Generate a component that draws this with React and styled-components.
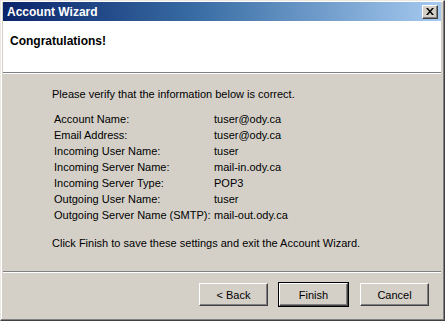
import React from 'react'
import styled, {createGlobalStyle} from 'styled-components'

const GlobalStyle = createGlobalStyle`
  html, body {
    margin: 0;
    padding: 0;
    background: #d4d0c8;
  }
  body {
    font-family: "Liberation Sans", Arial, sans-serif;
    font-size: 11px;
    color: #000;
  }
`

const rows = [
  ['Account Name:', 'tuser@ody.ca'],
  ['Email Address:', 'tuser@ody.ca'],
  ['Incoming User Name:', 'tuser'],
  ['Incoming Server Name:', 'mail-in.ody.ca'],
  ['Incoming Server Type:', 'POP3'],
  ['Outgoing User Name:', 'tuser'],
  ['Outgoing Server Name (SMTP):', 'mail-out.ody.ca'],
]

const App = () => {
  return (
    <>
      <GlobalStyle />
      <Window>
        <TitleBar>
          <TitleText>Account Wizard</TitleText>
          <CloseButton>
            <svg width="8" height="7" viewBox="0 0 8 7">
              <path d="M0 0h2l2 2.5L6 0h2L5 3.5 8 7H6L4 4.5 2 7H0l3-3.5z" fill="#000" />
            </svg>
          </CloseButton>
        </TitleBar>
        <Header>
          <HeaderTitle>Congratulations!</HeaderTitle>
        </Header>
        <Body>
          <Intro>Please verify that the information below is correct.</Intro>
          <InfoTable>
            {rows.map(([label, value]) => (
              <React.Fragment key={label}>
                <Label>{label}</Label>
                <Value>{value}</Value>
              </React.Fragment>
            ))}
          </InfoTable>
          <Outro>Click Finish to save these settings and exit the Account Wizard.</Outro>
        </Body>
        <Footer>
          <Button>&lt; Back</Button>
          <Button $default>Finish</Button>
          <Button $gap>Cancel</Button>
        </Footer>
      </Window>
    </>
  )
}

const Window = styled.div`
  width: 445px;
  height: 321px;
  box-sizing: border-box;
  display: flex;
  flex-direction: column;
  background: #d4d0c8;
  border-top: 1px solid #ece9e2;
  border-left: 1px solid #ece9e2;
  border-right: 1px solid #404040;
  border-bottom: 1px solid #404040;
  padding: 1px 3px 2px 2px;
  box-shadow: inset -1px -1px 0 #808080, inset 1px 1px 0 #fff;
`

const TitleBar = styled.div`
  height: 19px;
  display: flex;
  align-items: center;
  justify-content: space-between;
  padding: 0 3px 0 4px;
  background: linear-gradient(to right, #0a246a 0%, #3a6ea5 45%, #a6caf0 100%);
`

const TitleText = styled.span`
  color: #fff;
  font-weight: bold;
  font-size: 12px;
`

const CloseButton = styled.div`
  width: 16px;
  height: 14px;
  box-sizing: border-box;
  display: flex;
  align-items: center;
  justify-content: center;
  background: #d4d0c8;
  border-top: 1px solid #fff;
  border-left: 1px solid #fff;
  border-right: 1px solid #404040;
  border-bottom: 1px solid #404040;
  box-shadow: inset -1px -1px 0 #808080;
`

const Header = styled.div`
  height: 52px;
  background: #fff;
  box-sizing: border-box;
  padding: 13px 0 0 7px;
  border-bottom: 1px solid #808080;
  box-shadow: 0 1px 0 #fff;
`

const HeaderTitle = styled.div`
  font-weight: bold;
  font-size: 12px;
`

const Body = styled.div`
  flex: 1;
  padding: 15px 0 0 49px;
`

const Intro = styled.div`
  margin-bottom: 11px;
`

const InfoTable = styled.div`
  display: grid;
  grid-template-columns: 160px auto;
  grid-auto-rows: 16px;
  padding-left: 2px;
  align-items: center;
  white-space: nowrap;
`

const Label = styled.div``

const Value = styled.div``

const Outro = styled.div`
  margin-top: 14px;
`

const Footer = styled.div`
  height: 47px;
  box-sizing: border-box;
  display: flex;
  justify-content: flex-end;
  align-items: flex-start;
  gap: 11px;
  padding: 11px 12px 0 0;
  border-top: 1px solid #808080;
  box-shadow: inset 0 1px 0 #fff;
`

const Button = styled.button`
  width: 69px;
  height: 23px;
  box-sizing: border-box;
  font-family: "Liberation Sans", Arial, sans-serif;
  font-size: 11px;
  color: #000;
  background: #d4d0c8;
  border-top: 1px solid #fff;
  border-left: 1px solid #fff;
  border-right: 1px solid #404040;
  border-bottom: 1px solid #404040;
  box-shadow: inset -1px -1px 0 #808080;
  padding: 0;
  margin-left: ${p => (p.$gap ? '1px' : '0')};
  ${p => p.$default && `
    outline: 1px solid #000;
    outline-offset: 0;
  `}
`

export default App
